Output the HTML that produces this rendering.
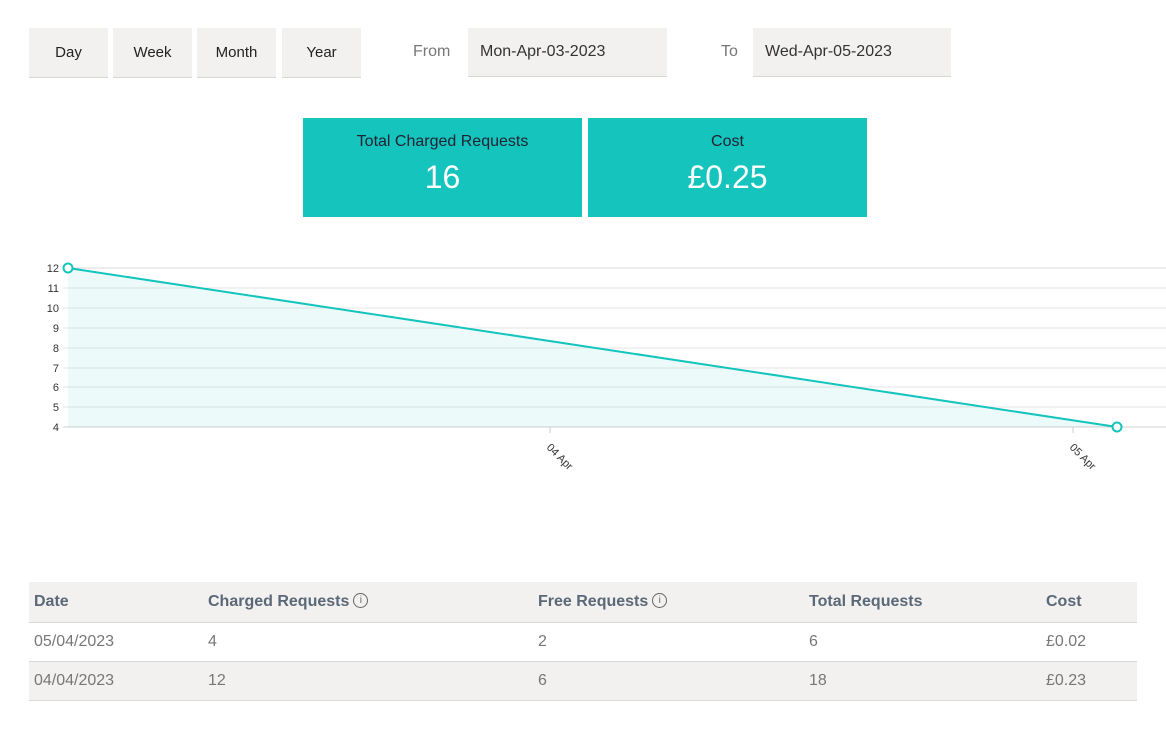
<!DOCTYPE html>
<html><head><style>
body{margin:0;background:#fff;font-family:"Liberation Sans",sans-serif;width:1166px;height:730px;overflow:hidden;position:relative}
.b{position:absolute;top:28px;height:49px;background:#f2f1f0;border-bottom:1px solid #d6d6d6;font-size:15px;color:#222;display:flex;align-items:center;justify-content:center}
.l{position:absolute;top:43px;font-size:16px;color:#777}
.in{position:absolute;top:28px;height:49px;background:#f2f1f0;border-bottom:1px solid #d6d6d6;font-size:16px;color:#333;display:flex;align-items:center;padding-left:12px;box-sizing:border-box}
.c{position:absolute;top:118px;height:99px;width:279px;background:#14c4bd;text-align:center;color:#fff}
.c .t{font-size:16px;color:#223;margin-top:15px}
.c .v{font-size:32px;margin-top:8px}
table{position:absolute;left:29px;top:582px;width:1108px;border-collapse:collapse;font-size:16px}
td,th{text-align:left;height:39px;padding:0 0 0 5px;border-bottom:1px solid #d9d9d9;color:#777;font-weight:normal;box-sizing:border-box}
th{color:#5b6878;font-weight:bold;background:#f2f1ef;height:40px}
tr.g td{background:#f2f1ef}
.i{display:inline-block;width:13px;height:13px;border:1px solid #666;border-radius:50%;font-size:10px;text-align:center;line-height:13px;font-weight:normal;vertical-align:middle;position:relative;top:-1px;color:#666;margin-left:4px}
</style></head><body>
<div class="b" style="left:29px;width:79px">Day</div>
<div class="b" style="left:113px;width:79px">Week</div>
<div class="b" style="left:197px;width:79px">Month</div>
<div class="b" style="left:282px;width:79px">Year</div>
<div class="l" style="left:413px">From</div>
<div class="in" style="left:468px;width:199px">Mon-Apr-03-2023</div>
<div class="l" style="left:721px">To</div>
<div class="in" style="left:753px;width:198px">Wed-Apr-05-2023</div>
<div class="c" style="left:303px"><div class="t">Total Charged Requests</div><div class="v">16</div></div>
<div class="c" style="left:588px"><div class="t">Cost</div><div class="v">£0.25</div></div>
<svg style="position:absolute;left:0;top:0" width="1166" height="500" font-family="Liberation Sans" font-size="11" fill="#333">
<g stroke="#e6e6e6">
<line x1="63" x2="1166" y1="268" y2="268" stroke="#d8d8d8"/><line x1="63" x2="1166" y1="288" y2="288"/><line x1="63" x2="1166" y1="308" y2="308"/><line x1="63" x2="1166" y1="328" y2="328"/><line x1="63" x2="1166" y1="348" y2="348"/><line x1="63" x2="1166" y1="368" y2="368"/><line x1="63" x2="1166" y1="387" y2="387"/><line x1="63" x2="1166" y1="407" y2="407"/>
<line x1="63" x2="1166" y1="427" y2="427" stroke="#d0d0d0"/>
<line x1="550" x2="550" y1="427" y2="433" stroke="#ccc"/><line x1="1073" x2="1073" y1="427" y2="433" stroke="#ccc"/>
</g>
<polygon points="68,268 1117,427 68,427" fill="#14c4bd" fill-opacity="0.08"/>
<line x1="68" y1="268" x2="1117" y2="427" stroke="#14c4bd" stroke-width="2"/>
<circle cx="68" cy="268" r="4.5" fill="#fff" stroke="#14c4bd" stroke-width="2"/>
<circle cx="1117" cy="427" r="4.5" fill="#fff" stroke="#14c4bd" stroke-width="2"/>
<g text-anchor="end">
<text x="59" y="272">12</text><text x="59" y="292">11</text><text x="59" y="312">10</text><text x="59" y="332">9</text><text x="59" y="352">8</text><text x="59" y="372">7</text><text x="59" y="391">6</text><text x="59" y="411">5</text><text x="59" y="431">4</text>
</g>
<text transform="translate(546,448) rotate(45)">04 Apr</text>
<text transform="translate(1069,448) rotate(45)">05 Apr</text>
</svg>
<table>
<tr><th style="width:174px">Date</th><th style="width:330px">Charged Requests<span class="i">i</span></th><th style="width:271px">Free Requests<span class="i">i</span></th><th style="width:237px">Total Requests</th><th>Cost</th></tr>
<tr><td>05/04/2023</td><td>4</td><td>2</td><td>6</td><td>£0.02</td></tr>
<tr class="g"><td>04/04/2023</td><td>12</td><td>6</td><td>18</td><td>£0.23</td></tr>
</table>
</body></html>
